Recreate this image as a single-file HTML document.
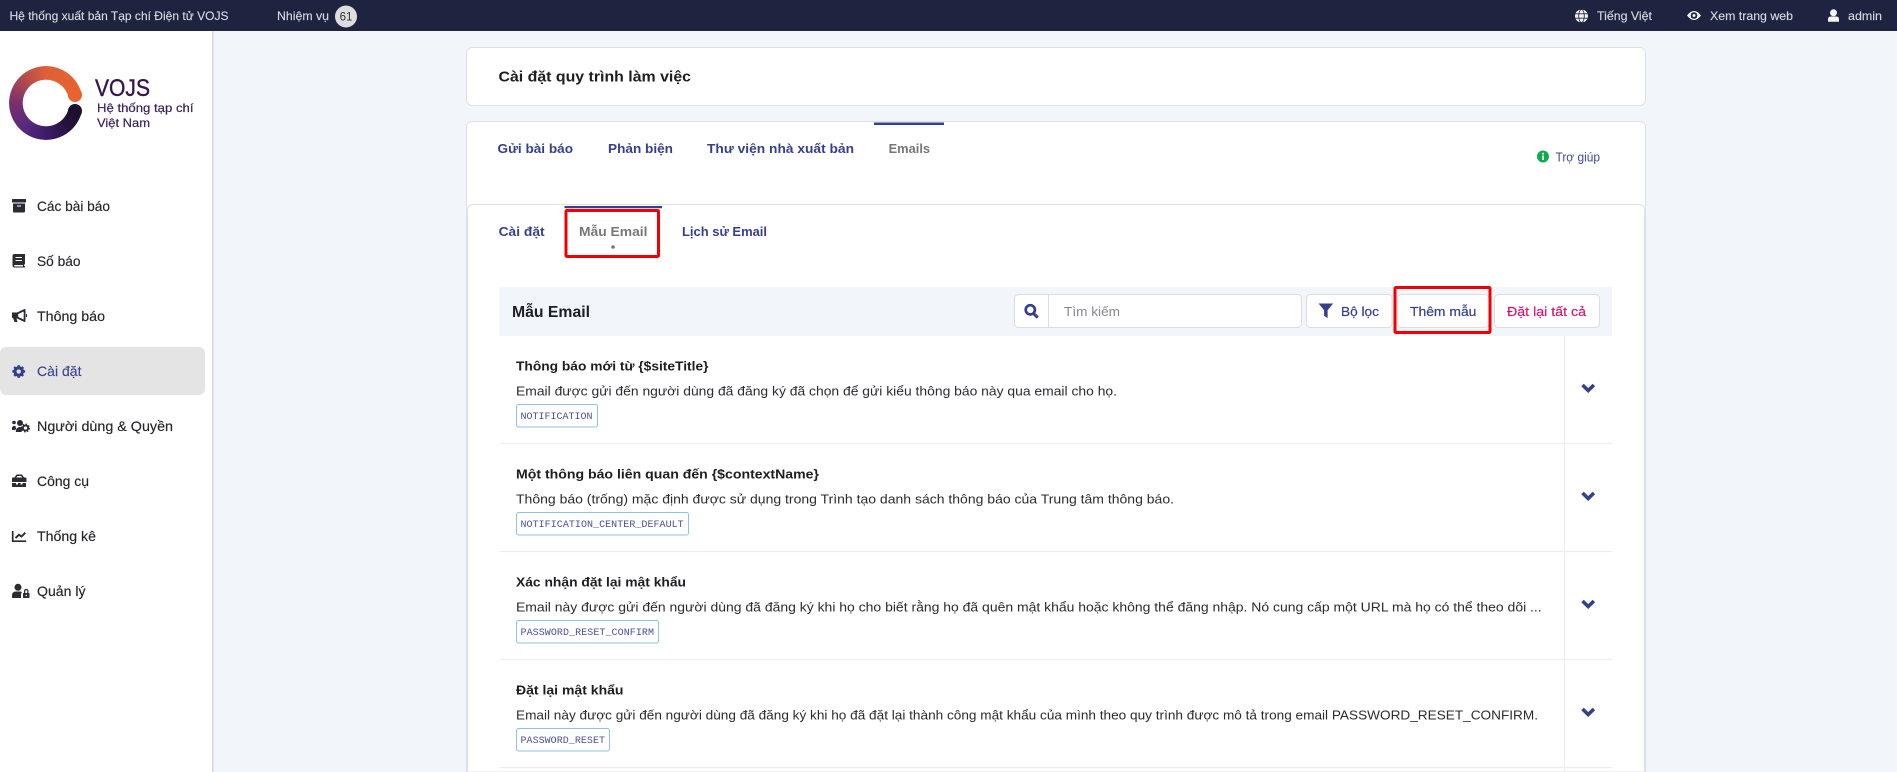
<!DOCTYPE html>
<html lang="vi">
<head>
<meta charset="utf-8">
<title>Mẫu Email</title>
<style>
html,body{margin:0;padding:0;width:1897px;height:772px;overflow:hidden;background:#f2f5fa}
svg.page{position:absolute;left:0;top:0;display:block;font-family:"Liberation Sans","Noto Sans CJK SC",sans-serif}
.ring{position:absolute;left:9px;top:66px;width:74px;height:74px;border-radius:50%;
background:conic-gradient(#dd6038 0deg,#e8632f 75deg,transparent 75deg,transparent 105deg,#1f1030 105deg,#241238 135deg,#3d1c6a 180deg,#5a2a80 225deg,#7a2f6a 270deg,#b04a50 315deg,#dd6038 360deg);
-webkit-mask:radial-gradient(circle,transparent 23px,#000 23.5px);mask:radial-gradient(circle,transparent 23px,#000 23.5px)}
.cap{position:absolute;width:14px;height:14px;border-radius:50%}
.t{font-size:12px;fill:#d6d7df;stroke:#d6d7df;stroke-width:.15}
.n{font-size:14px;fill:#24252b;stroke:#24252b;stroke-width:.15}
.tab{font-size:13px;font-weight:700;fill:#363f8d}
.act{font-size:13px;font-weight:700;fill:#77777a}
.rt{font-size:13px;font-weight:700;fill:#1d1e22}
.rd{font-size:13px;fill:#2b2c31}
.mono{font-family:"Liberation Mono",monospace;font-size:10px;fill:#4b4f9a}
.badge{fill:#fff;stroke:#8fc3de;stroke-width:1}
.btn{fill:#fff;stroke:#dcdde2;stroke-width:1}
.line{stroke:#eeeeee;stroke-width:1.2}
.chev{fill:none;stroke:#363f8d;stroke-width:3.6}
</style>
</head>
<body>
<svg class="page" xmlns="http://www.w3.org/2000/svg" width="1897" height="772" viewBox="0 0 1897 772">
  <!-- top bar -->
  <rect x="0" y="0" width="1897" height="31" fill="#1e2340"/>
  <text class="t" x="9.5" y="20" textLength="219" lengthAdjust="spacingAndGlyphs">Hệ thống xuất bản Tạp chí Điện tử VOJS</text>
  <text class="t" x="277" y="20" textLength="52" lengthAdjust="spacingAndGlyphs">Nhiệm vụ</text>
  <circle cx="346" cy="16.5" r="11" fill="#dedee0"/>
  <text x="346" y="20.5" text-anchor="middle" font-size="11.5" fill="#333">61</text>
  <circle cx="1581.5" cy="16" r="6.5" fill="#f4f4f8"/>
  <g stroke="#1e2340" stroke-width=".8" fill="none">
    <path d="M1575 13.8h13M1575 18.2h13"/>
    <ellipse cx="1581.5" cy="16" rx="2.8" ry="6.5"/>
  </g>
  <text class="t" x="1597" y="20" textLength="55" lengthAdjust="spacingAndGlyphs">Tiếng Việt</text>
  <path d="M1687 15.5Q1694 6.500 1701 15.500Q1694 24.500 1687 15.500Z" fill="#f4f4f8"/>
  <circle cx="1694" cy="15.500" r="3.300" fill="#1e2340"/>
  <circle cx="1694" cy="15.500" r="1.500" fill="#f4f4f8"/>
  <text class="t" x="1710" y="20" textLength="83" lengthAdjust="spacingAndGlyphs">Xem trang web</text>
  <circle cx="1833.5" cy="12.8" r="3.500" fill="#f4f4f8"/>
  <path d="M1828 21.700v-2.500q0-2.700 3-2.700h5q3 0 3 2.700v2.500Z" fill="#f4f4f8"/>
  <text class="t" x="1848" y="20" textLength="34" lengthAdjust="spacingAndGlyphs">admin</text>

  <!-- sidebar -->
  <rect x="0" y="31" width="212" height="741" fill="#fff"/>
  <rect x="212" y="31" width="1.6" height="741" fill="#d8d8dc"/>
  <rect x="0" y="347" width="205" height="48" rx="6" fill="#e4e4e4"/>

  <text x="95" y="96" font-size="24" fill="#35154f" stroke="#35154f" stroke-width=".4" textLength="55" lengthAdjust="spacingAndGlyphs">VOJS</text>
  <text x="97" y="112" font-size="12" fill="#3b2059" stroke="#3b2059" stroke-width=".2" textLength="96.5" lengthAdjust="spacingAndGlyphs">Hệ thống tạp chí</text>
  <text x="97" y="127" font-size="12" fill="#3b2059" stroke="#3b2059" stroke-width=".2" textLength="53" lengthAdjust="spacingAndGlyphs">Việt Nam</text>

  <g fill="#2a2b33">
    <!-- archive -->
    <rect x="12" y="199" width="14" height="3.500" rx=".6"/>
    <path d="M13 203.500h12v8q0 1-1 1H14q-1 0-1-1ZM17 205.500v1h4v-1Z" fill-rule="evenodd"/>
    <!-- book -->
    <path fill-rule="evenodd" d="M14.500 254h10.500v10.500h-1v1.500h1v1.500H14.500q-2 0-2-2v-9.500q0-2 2-2ZM15.500 257v1h6.500v-1ZM15.500 260v1h6.500v-1ZM14.200 265v.8q0 .7.7.7h8V265Z"/>
    <!-- bullhorn -->
    <path fill-rule="evenodd" d="M12 312.500h5l7.500-3.500q1 0 1 1v11q0 1-1 1l-7.500-3.500h-.5l1 3.500h-3l-1.200-3.500H14q-2 0-2-1.500ZM18.200 314v3l5.500 2.500v-8Z"/>
    <rect x="26" y="314" width="1" height="3"/>
    <!-- users cog -->
    <circle cx="14" cy="422.500" r="1.800"/>
    <path d="M12 430v-1.500q0-2.500 2-2.500h1.500l.5 2.500-.7 1.500Z"/>
    <circle cx="20" cy="423" r="3"/>
    <path d="M15.800 432q0-5 4-5h1.800l.6 2-.6 3Z"/>
    <circle cx="25.500" cy="428" r="2.600" fill="#fff" stroke="#2a2b33" stroke-width="1.900"/>
    <circle cx="25.500" cy="428" r="3.900" fill="none" stroke="#2a2b33" stroke-width="1.200" stroke-dasharray="1.500 1.560"/>
    <!-- toolbox -->
    <g transform="translate(0 -1.500)">
      <path fill-rule="evenodd" d="M16.500 476h5.500l2 3h2l.5 1v3.500H12V480l.5-1h2ZM17.300 477.500l-1 1.500h5.900l-1-1.500Z"/>
      <path d="M12 484.500h4v1.500h2v-1.500h2.500v1.500h2v-1.500h3.500v4H12Z"/>
    </g>
    <!-- user lock -->
    <circle cx="18" cy="587.300" r="3.500"/>
    <path d="M12 598v-2.500q0-4 4-4h4q1.500 0 2 .5-1 1-1 2.500V598Z"/>
    <rect x="23" y="593" width="6.500" height="5" rx=".7"/>
    <path d="M24.600 593v-1.600q0-1.900 1.650-1.900t1.650 1.900V593" fill="none" stroke="#2a2b33" stroke-width="1.200"/>
  </g>
  <circle cx="26.250" cy="595.500" r=".8" fill="#fff"/>
  <path d="M12.700 531v10.200h13.500" fill="none" stroke="#2a2b33" stroke-width="1.700"/>
  <path d="M15.500 538l3.500-3.300 2.500 1.800 3.800-3.800" fill="none" stroke="#2a2b33" stroke-width="1.900"/>
  <!-- cog -->
  <path fill-rule="evenodd" fill="#363f8d" transform="translate(18.700 371.500) scale(.7) translate(-19 -373.100)" d="M17.500 364h3l.5 2 1.700.7 1.800-1 2 2-1 1.800.7 1.500 2 .5v3l-2 .5-.7 1.700 1 1.800-2 2-1.800-1-1.700.7-.5 2h-3l-.5-2-1.700-.7-1.800 1-2-2 1-1.800-.7-1.700-2-.5v-3l2-.5.7-1.500-1-1.800 2-2 1.800 1 1.700-.7ZM19 370a3.100 3.100 0 1 0 .01 0Z"/>

  <text class="n" x="37" y="211" textLength="73" lengthAdjust="spacingAndGlyphs">Các bài báo</text>
  <text class="n" x="37" y="266" textLength="43.500" lengthAdjust="spacingAndGlyphs">Số báo</text>
  <text class="n" x="37" y="321" textLength="68" lengthAdjust="spacingAndGlyphs">Thông báo</text>
  <text class="n" x="37" y="376" textLength="44.500" lengthAdjust="spacingAndGlyphs" style="fill:#3f4690;stroke:#3f4690">Cài đặt</text>
  <text class="n" x="37" y="431" textLength="136" lengthAdjust="spacingAndGlyphs">Người dùng &amp; Quyền</text>
  <text class="n" x="37" y="486" textLength="52" lengthAdjust="spacingAndGlyphs">Công cụ</text>
  <text class="n" x="37" y="541" textLength="59" lengthAdjust="spacingAndGlyphs">Thống kê</text>
  <text class="n" x="37" y="596" textLength="48.500" lengthAdjust="spacingAndGlyphs">Quản lý</text>

  <!-- header card -->
  <rect x="466.500" y="47.500" width="1179" height="58" rx="6" fill="#fff" stroke="#dfe0e5"/>
  <text x="498.500" y="81.500" font-size="15" font-weight="700" fill="#1d1e22" textLength="192.500" lengthAdjust="spacingAndGlyphs">Cài đặt quy trình làm việc</text>

  <!-- outer tab card -->
  <path d="M466.500 772V127.500q0-6 6-6H1639.500q6 0 6 6V772Z" fill="#fff" stroke="#dfe0e5"/>
  <rect x="874" y="122.500" width="70" height="2.500" fill="#363f8d"/>
  <text class="tab" x="497.500" y="153" textLength="75.500" lengthAdjust="spacingAndGlyphs">Gửi bài báo</text>
  <text class="tab" x="608" y="153" textLength="65" lengthAdjust="spacingAndGlyphs">Phản biện</text>
  <text class="tab" x="707" y="153" textLength="147" lengthAdjust="spacingAndGlyphs">Thư viện nhà xuất bản</text>
  <text class="act" x="888.600" y="153" textLength="41.500" lengthAdjust="spacingAndGlyphs">Emails</text>

  <circle cx="1543" cy="156.500" r="6" fill="#12ab4f"/>
  <rect x="1542.200" y="155.500" width="1.700" height="4.500" fill="#fff"/>
  <rect x="1542.200" y="152.800" width="1.700" height="1.700" fill="#fff"/>
  <text x="1555.500" y="161.500" font-size="13" fill="#3f4a9a" textLength="44.500" lengthAdjust="spacingAndGlyphs">Trợ giúp</text>

  <!-- inner card -->
  <path d="M467.500 772V210.500q0-6 6-6H1638.500q6 0 6 6V772Z" fill="#fff" stroke="#dfe0e5"/>
  <rect x="564.500" y="206" width="97.500" height="2.200" fill="#363f8d"/>
  <text class="tab" x="498.600" y="236" textLength="46" lengthAdjust="spacingAndGlyphs">Cài đặt</text>
  <text class="act" x="579" y="236" textLength="68.500" lengthAdjust="spacingAndGlyphs">Mẫu Email</text>
  <text class="tab" x="682" y="236" textLength="85" lengthAdjust="spacingAndGlyphs">Lịch sử Email</text>
  <circle cx="613" cy="247" r="1.800" fill="#77777a"/>

  <!-- list header -->
  <rect x="499" y="287" width="1113" height="49" fill="#f2f5fa"/>
  <text x="512" y="317" font-size="15.500" font-weight="700" fill="#1d1e22" textLength="78" lengthAdjust="spacingAndGlyphs">Mẫu Email</text>

  <rect x="1014.500" y="294.500" width="287" height="33" rx="4" class="btn"/>
  <rect x="1048" y="295" width="1" height="32" fill="#dcdde2"/>
  <circle cx="1030.300" cy="309.800" r="4.600" fill="none" stroke="#363f8d" stroke-width="2.700"/>
  <path d="M1033.500 313.500l4.200 4" stroke="#363f8d" stroke-width="3" fill="none"/>
  <text x="1064" y="316" font-size="13" fill="#85878d" textLength="56" lengthAdjust="spacingAndGlyphs">Tìm kiếm</text>

  <rect x="1306.500" y="294.500" width="85.500" height="33" rx="4" class="btn"/>
  <path d="M1318.600 303.500h14.500l-5.500 6.800v8l-3.500-2.500v-5.500Z" fill="#363f8d"/>
  <text x="1341" y="316" font-size="13" fill="#363f8d" stroke="#363f8d" stroke-width=".2" textLength="38" lengthAdjust="spacingAndGlyphs">Bộ lọc</text>

  <rect x="1397.500" y="294.500" width="91.500" height="33" rx="4" class="btn"/>
  <text x="1410" y="316" font-size="13" fill="#363f8d" stroke="#363f8d" stroke-width=".2" textLength="66.400" lengthAdjust="spacingAndGlyphs">Thêm mẫu</text>

  <rect x="1494.500" y="294.500" width="105" height="33" rx="4" class="btn"/>
  <text x="1507" y="316" font-size="13" fill="#d6156f" stroke="#d6156f" stroke-width=".2" textLength="79" lengthAdjust="spacingAndGlyphs">Đặt lại tất cả</text>

  <!-- rows -->
  <path class="line" d="M1564.500 336V772"/>
  <path class="line" d="M499 443.500H1612M499 551.500H1612M499 659.500H1612M499 767.500H1612"/>

  <text class="rt" x="516" y="370.500" textLength="192.500" lengthAdjust="spacingAndGlyphs">Thông báo mới từ {$siteTitle}</text>
  <text class="rd" x="516" y="395.500" textLength="601" lengthAdjust="spacingAndGlyphs">Email được gửi đến người dùng đã đăng ký đã chọn để gửi kiểu thông báo này qua email cho họ.</text>
  <rect class="badge" x="516.500" y="404.500" width="81" height="22.500" rx="2"/>
  <text class="mono" x="520.500" y="419">NOTIFICATION</text>
  <path class="chev" d="M1582.500 385l5.700 5.500 5.700-5.500"/>

  <text class="rt" x="516" y="478.500" textLength="303" lengthAdjust="spacingAndGlyphs">Một thông báo liên quan đến {$contextName}</text>
  <text class="rd" x="516" y="503.500" textLength="658" lengthAdjust="spacingAndGlyphs">Thông báo (trống) mặc định được sử dụng trong Trình tạo danh sách thông báo của Trung tâm thông báo.</text>
  <rect class="badge" x="516.500" y="512.500" width="172" height="22.500" rx="2"/>
  <text class="mono" x="520.500" y="527" textLength="163.200">NOTIFICATION_CENTER_DEFAULT</text>
  <path class="chev" d="M1582.500 493l5.700 5.500 5.700-5.500"/>

  <text class="rt" x="516" y="586.500" textLength="170" lengthAdjust="spacingAndGlyphs">Xác nhận đặt lại mật khẩu</text>
  <text class="rd" x="516" y="611.500" textLength="1025.700" lengthAdjust="spacingAndGlyphs">Email này được gửi đến người dùng đã đăng ký khi họ cho biết rằng họ đã quên mật khẩu hoặc không thể đăng nhập. Nó cung cấp một URL mà họ có thể theo dõi ...</text>
  <rect class="badge" x="516.500" y="620.500" width="142" height="22.500" rx="2"/>
  <text class="mono" x="520.500" y="635" textLength="133.500">PASSWORD_RESET_CONFIRM</text>
  <path class="chev" d="M1582.500 601l5.700 5.500 5.700-5.500"/>

  <text class="rt" x="516" y="694.500" textLength="107.500" lengthAdjust="spacingAndGlyphs">Đặt lại mật khẩu</text>
  <text class="rd" x="516" y="719.500" textLength="1022" lengthAdjust="spacingAndGlyphs">Email này được gửi đến người dùng đã đăng ký khi họ đã đặt lại thành công mật khẩu của mình theo quy trình được mô tả trong email PASSWORD_RESET_CONFIRM.</text>
  <rect class="badge" x="516.500" y="728.500" width="93" height="22.500" rx="2"/>
  <text class="mono" x="520.500" y="743" textLength="84.500">PASSWORD_RESET</text>
  <path class="chev" d="M1582.500 709l5.700 5.500 5.700-5.500"/>

  <!-- highlight boxes -->
  <rect x="566" y="210.500" width="92.500" height="46" rx="1" fill="none" stroke="#f00000" stroke-width="3"/>
  <rect x="1395" y="287.500" width="95" height="45" rx="1" fill="none" stroke="#f00000" stroke-width="3"/>
</svg>
<div class="ring"></div>
<div class="cap" style="left:68px;top:88px;background:#e8632f"></div>
<div class="cap" style="left:68px;top:104px;background:#1f1030"></div>
</body>
</html>
